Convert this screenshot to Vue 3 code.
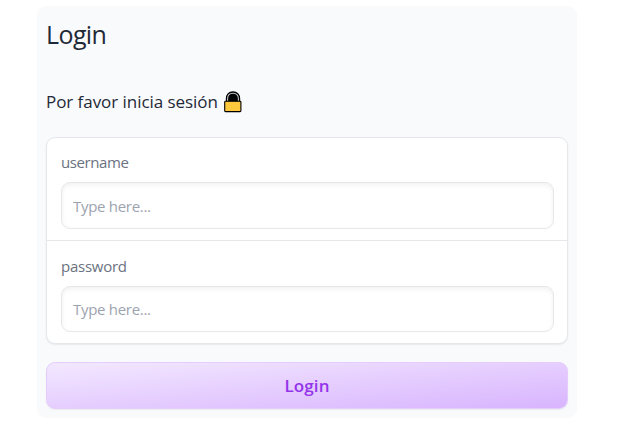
<script setup>
import { ref } from 'vue'

const username = ref('')
const password = ref('')
</script>

<template>
  <main class="card">
    <h1 class="title"><span>Login</span></h1>
    <p class="prompt">
      <span class="prompt-text">Por favor inicia sesión</span>
      <svg class="lock" width="20" height="22" viewBox="0 0 20 22" aria-hidden="true">
        <path d="M3.400 10.500V7.800C3.400 3.600 6.100.9 10 .9s6.600 2.700 6.600 6.900v2.700z" fill="#000" stroke="#000" stroke-width="1.200" />
        <path d="M4.600 10V7.800C4.600 4.300 6.700 2.200 10 2.200s5.400 2.100 5.400 5.600V10" fill="none" stroke="#c4c6ca" stroke-width="1.100" />
        <rect x="1.700" y="10.300" width="16.200" height="10.300" rx=".8" fill="#ffc83d" stroke="#000" stroke-width="1.100" />
      </svg>
    </p>
    <form class="form" @submit.prevent>
      <div class="group">
        <label class="field">
          <span class="label user">username</span>
          <input v-model="username" class="input" type="text" placeholder="Type here..." />
        </label>
        <label class="field second">
          <span class="label pass">password</span>
          <input v-model="password" class="input" type="password" placeholder="Type here..." />
        </label>
      </div>
      <button class="submit" type="submit">Login</button>
    </form>
  </main>
</template>

<style>
body {
  margin: 0;
  background: #fff;
}
</style>

<style scoped>
.card {
  box-sizing: border-box;
  width: 540px;
  height: 412px;
  margin: 6px 0 0 37px;
  padding: 9px;
  border-radius: 9px;
  background: #f9fafc;
  color: #1f2937;
  font-family: "Segoe UI", "Open Sans", "Noto Sans", sans-serif;
}
.title {
  height: 40px;
  margin: 0;
  font-size: 25px;
  font-weight: 400;
  line-height: 39px;
  letter-spacing: -0.6px;
}
.prompt {
  display: flex;
  align-items: center;
  height: 30px;
  margin: 32px 0 20px;
  font-size: 17px;
  font-weight: 400;
  line-height: 30px;
}
.prompt-text {
  width: 177px;
  white-space: nowrap;
  letter-spacing: -0.05px;
}
.form {
  display: flex;
  flex-direction: column;
  gap: 18px;
}
.group {
  box-sizing: border-box;
  height: 207px;
  border: 1px solid #e5e7eb;
  border-radius: 9px;
  background: #fff;
  box-shadow: 0 1px 2px rgba(0, 0, 0, 0.07);
}
.field {
  box-sizing: border-box;
  display: flex;
  flex-direction: column;
  height: 102px;
  padding: 10px 13px 11px 14px;
}
.field.second {
  height: 103px;
  padding-top: 11px;
  border-top: 1px solid #e5e7eb;
}
.label {
  height: 30px;
  margin-bottom: 4px;
  color: #6b7280;
  font-size: 15px;
  line-height: 28px;
}
.user {
  letter-spacing: -0.4px;
}
.pass {
  letter-spacing: -0.25px;
}
.input {
  box-sizing: border-box;
  width: 100%;
  height: 47px;
  padding: 0 11px;
  border: 1px solid #e5e7eb;
  border-radius: 9px;
  outline: none;
  background: #fff;
  box-shadow: inset 0 2px 5px rgba(0, 0, 0, 0.06);
  color: #1f2937;
  font: 15px "Segoe UI", "Open Sans", "Noto Sans", sans-serif;
  letter-spacing: -0.3px;
}
.second .input {
  height: 46px;
}
.input::placeholder {
  color: #9ca3af;
  opacity: 1;
}
.submit {
  box-sizing: border-box;
  height: 47px;
  padding: 0;
  border: 1px solid #e4cdfc;
  border-radius: 9px;
  background: linear-gradient(to bottom right, #f3e8ff, #d8b4fe);
  box-shadow: 0 1px 2px rgba(0, 0, 0, 0.06);
  color: #9333ea;
  font: 600 17px "Segoe UI", "Open Sans", "Noto Sans", sans-serif;
  letter-spacing: 0.1px;
}
</style>
